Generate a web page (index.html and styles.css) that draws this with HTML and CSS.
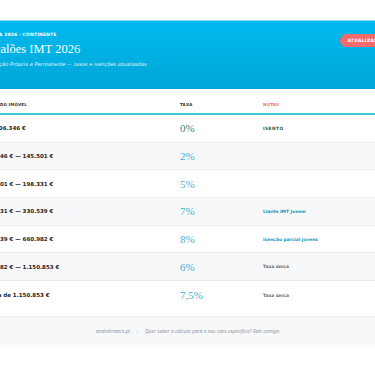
FILE: index.html
```html
<!DOCTYPE html>
<html lang="pt">
<head>
<meta charset="utf-8">
<link rel="stylesheet" href="styles.css">
</head>
<body>
<div class="card">
  <header class="hero">
    <div class="hero-text">
      <div class="eyebrow">Tabela 2026 · Continente</div>
      <h1 class="title">Escalões IMT 2026</h1>
      <div class="subtitle">Habitação Própria e Permanente — taxas e isenções atualizadas</div>
    </div>
    <span class="badge">Atualizado</span>
  </header>
  <div class="table">
    <div class="row head">
      <div class="c1">Valor do imóvel</div>
      <div class="c2">Taxa</div>
      <div class="c3 notes-h">Notas</div>
    </div>
    <div class="row">
      <div class="c1 range">Até 106.346 €</div>
      <div class="c2 rate rate-zero">0%</div>
      <div class="c3 note note-exempt">ISENTO</div>
    </div>
    <div class="row alt">
      <div class="c1 range">106.346 € — 145.501 €</div>
      <div class="c2 rate">2%</div>
      <div class="c3"></div>
    </div>
    <div class="row">
      <div class="c1 range">145.501 € — 198.331 €</div>
      <div class="c2 rate">5%</div>
      <div class="c3"></div>
    </div>
    <div class="row alt">
      <div class="c1 range">198.331 € — 330.539 €</div>
      <div class="c2 rate">7%</div>
      <div class="c3 note note-young">Limite IMT Jovem</div>
    </div>
    <div class="row">
      <div class="c1 range">330.539 € — 660.982 €</div>
      <div class="c2 rate">8%</div>
      <div class="c3 note note-young">Isenção parcial jovens</div>
    </div>
    <div class="row alt">
      <div class="c1 range">660.982 € — 1.150.853 €</div>
      <div class="c2 rate">6%</div>
      <div class="c3 note note-single">Taxa única</div>
    </div>
    <div class="row last">
      <div class="c1 range">Acima de 1.150.853 €</div>
      <div class="c2 rate">7,5%</div>
      <div class="c3 note note-single">Taxa única</div>
    </div>
  </div>
  <footer class="foot">
    <span>andrebranco.pt</span><span class="sep">|</span><span>Quer saber o cálculo para o seu caso específico? Fale comigo</span>
  </footer>
</div>
</body>
</html>
```
FILE: styles.css
```css
html, body {
  margin: 0;
  padding: 0;
  background: #ffffff;
  overflow: hidden;
}
body {
  display: flex;
  justify-content: center;
  padding-top: 20px;
  font-family: "DejaVu Sans", "Open Sans", sans-serif;
}
.card {
  flex: 0 0 460px;
  width: 460px;
  background: #ffffff;
  box-shadow: 0 2px 8px rgba(0, 0, 0, 0.05);
}
.hero {
  display: flex;
  justify-content: space-between;
  align-items: flex-start;
  height: 69px;
  box-sizing: border-box;
  padding: 11px 25px 0 25px;
  background: linear-gradient(180deg, #00baef 0%, #00a6d8 100%);
  border-top: 1px solid #7fdcf6;
  color: #ffffff;
}
.eyebrow {
  font-size: 4.5px;
  font-weight: 700;
  letter-spacing: 0.15px;
  text-transform: uppercase;
  line-height: 6px;
}
.title {
  margin: 4px 0 0 0;
  font-family: "Liberation Serif", "DejaVu Serif", serif;
  font-weight: 400;
  font-size: 12.5px;
  line-height: 15px;
}
.subtitle {
  margin-top: 4px;
  font-size: 5.1px;
  font-style: italic;
  line-height: 7px;
  opacity: 0.9;
}
.badge {
  margin-top: 2px;
  margin-right: 3px;
  background: #f26b6b;
  color: #ffffff;
  font-size: 4.5px;
  font-weight: 700;
  letter-spacing: 0.3px;
  text-transform: uppercase;
  padding: 4px 7px;
  border-radius: 10px;
  line-height: 5px;
}
.row {
  display: grid;
  grid-template-columns: 197.5px 83px 1fr;
  align-items: center;
  height: 27.7px;
  padding: 0 25px;
  border-bottom: 1px solid #e9edf0;
  box-sizing: border-box;
}
.row.alt {
  background: #f6f8fa;
}
.row.head {
  height: 26px;
  padding-top: 6px;
  border-bottom: 2px solid #3ccbd0;
  font-size: 4px;
  font-weight: 700;
  text-transform: uppercase;
  color: #2b2f33;
  letter-spacing: 0.2px;
}
.row.last {
  height: 28px;
  border-bottom: none;
}
.notes-h {
  color: #f26b6b;
}
.range {
  font-size: 5.5px;
  font-weight: 700;
  color: #1f2327;
}
.rate {
  font-family: "Liberation Serif", "DejaVu Serif", serif;
  font-size: 11px;
  color: #3fb2d2;
}
.rate-zero {
  color: #3f8a7c;
}
.note {
  font-size: 4.4px;
  font-weight: 700;
}
.note-exempt {
  color: #235c4a;
  letter-spacing: 0.4px;
}
.note-young {
  color: #1598b8;
}
.note-single {
  color: #666b70;
}
.foot {
  display: flex;
  justify-content: center;
  align-items: center;
  gap: 6px;
  margin-top: 7px;
  height: 28px;
  background: #f6f8fa;
  border-top: 1px solid #eef1f3;
  font-family: "Open Sans", "DejaVu Sans", sans-serif;
  font-size: 5px;
  font-style: italic;
  color: #8a9096;
}
.sep {
  color: #c5cacf;
  font-style: normal;
}
```
